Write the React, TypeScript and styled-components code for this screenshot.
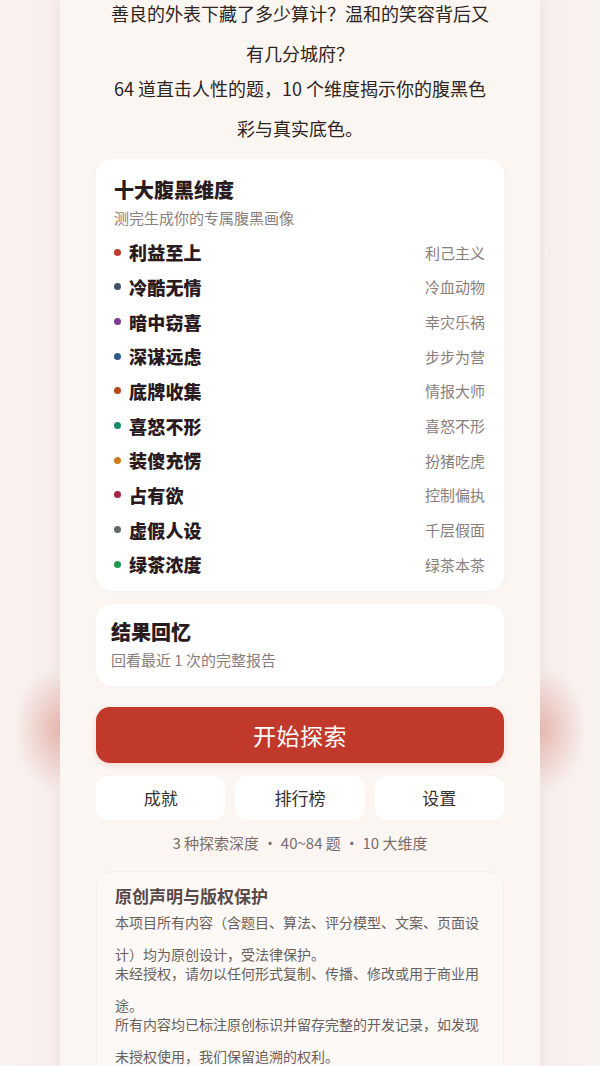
import React from 'react'
import styled, { createGlobalStyle } from 'styled-components'

const GlobalStyle = createGlobalStyle`
  html, body {
    margin: 0;
    padding: 0;
  }
  body {
    font-family: "Noto Sans CJK SC", "Noto Sans", sans-serif;
    background: #f8f1ee;
    color: #2e2422;
  }
`

const Page = styled.div`
  min-height: 100vh;
  background:
    radial-gradient(ellipse 44px 62px at 58px 736px, rgba(222, 150, 140, 0.6), rgba(222, 150, 140, 0) 100%),
    radial-gradient(ellipse 44px 62px at 542px 736px, rgba(222, 150, 140, 0.6), rgba(222, 150, 140, 0) 100%),
    linear-gradient(90deg, #f9f3f0 0px, #f6eeeb 58px, #f6eeeb 542px, #f9f3f0 600px);
`

const Column = styled.main`
  width: 480px;
  min-height: 100vh;
  margin: 0 auto;
  padding: 0 36px 40px;
  box-sizing: border-box;
  background: #fcf6f3;
  box-shadow: 0 0 18px rgba(120, 80, 70, 0.05);
`

const Intro = styled.div`
  max-width: 384px;
  margin: -7px auto 0;
  text-align: center;
`

const IntroPara = styled.p`
  margin: 0;
  font-size: 18px;
  line-height: 40px;
  color: #2e2422;
  & + & {
    margin-top: -5px;
  }
`

const Card = styled.section<{ $gap?: number }>`
  margin-top: ${p => p.$gap ?? 13}px;
  background: #ffffff;
  border-radius: 16px;
  box-shadow: 0 1px 3px rgba(140, 90, 80, 0.05);
`

const DimCard = styled(Card)`
  padding: 18px 19px 9px 18px;
`

const RecallCard = styled(Card)`
  padding: 15px 18px 15px 15px;
`

const CardTitle = styled.h2`
  margin: 0;
  font-size: 20px;
  line-height: 26px;
  font-weight: 900;
  color: #2b1b1f;
`

const CardSub = styled.p<{ $gap?: number }>`
  margin: ${p => p.$gap ?? 4}px 0 0;
  font-size: 15px;
  line-height: 22px;
  color: #8a7e7b;
`

const DimList = styled.ul`
  list-style: none;
  margin: 6px 0 0;
  padding: 0;
`

const DimRow = styled.li`
  display: flex;
  align-items: center;
  height: 34.67px;
`

const Dot = styled.span<{ $color: string }>`
  width: 7px;
  height: 7px;
  border-radius: 50%;
  background: ${p => p.$color};
  margin-right: 8px;
  flex: none;
`

const DimName = styled.span`
  font-size: 18px;
  font-weight: 900;
  color: #2a1a1e;
  letter-spacing: 0.2px;
`

const DimTag = styled.span`
  margin-left: auto;
  font-size: 15px;
  color: #8a7e7b;
`

const StartButton = styled.button`
  display: block;
  width: 100%;
  height: 56px;
  margin-top: 21px;
  border: none;
  border-radius: 14px;
  background: #c0392b;
  color: #ffffff;
  font-family: inherit;
  font-size: 23px;
  font-weight: 400;
  letter-spacing: 0.5px;
  box-shadow: 0 2px 6px rgba(192, 57, 43, 0.18);
`

const ActionRow = styled.div`
  display: grid;
  grid-template-columns: repeat(3, 1fr);
  gap: 10px;
  margin-top: 13px;
`

const ActionButton = styled.button`
  height: 44px;
  border: none;
  border-radius: 12px;
  background: #ffffff;
  color: #3a2f2d;
  font-family: inherit;
  font-size: 17px;
  font-weight: 400;
`

const Stats = styled.p`
  margin: 12px 0 0;
  font-size: 15px;
  line-height: 22px;
  text-align: center;
  color: #7a6e6b;
`

const Notice = styled.section`
  margin-top: 17px;
  padding: 13px 18px 20px;
  border-radius: 16px;
  background: #fdf9f7;
  border: 1px solid #f7eeea;
`

const NoticeTitle = styled.h3`
  margin: 0;
  font-size: 17px;
  line-height: 22px;
  font-weight: 700;
  color: #5a4a47;
`

const NoticePara = styled.p`
  margin: -1px 0 0;
  font-size: 14px;
  line-height: 32px;
  color: #6b5f5c;
  & + & {
    margin-top: -13px;
  }
`

const dimensions = [
  { name: '利益至上', tag: '利己主义', color: '#c0392b' },
  { name: '冷酷无情', tag: '冷血动物', color: '#3d5266' },
  { name: '暗中窃喜', tag: '幸灾乐祸', color: '#7d3c98' },
  { name: '深谋远虑', tag: '步步为营', color: '#2a5a8c' },
  { name: '底牌收集', tag: '情报大师', color: '#b9470f' },
  { name: '喜怒不形', tag: '喜怒不形', color: '#138d6f' },
  { name: '装傻充愣', tag: '扮猪吃虎', color: '#cf7a1c' },
  { name: '占有欲', tag: '控制偏执', color: '#a8233f' },
  { name: '虚假人设', tag: '千层假面', color: '#5f6b6b' },
  { name: '绿茶浓度', tag: '绿茶本茶', color: '#1f9a4c' },
]

export default function App() {
  return (
    <>
      <GlobalStyle />
      <Page>
        <Column>
          <Intro>
            <IntroPara>善良的外表下藏了多少算计？温和的笑容背后又有几分城府？</IntroPara>
            <IntroPara>64 道直击人性的题，10 个维度揭示你的腹黑色彩与真实底色。</IntroPara>
          </Intro>

          <DimCard $gap={11}>
            <CardTitle>十大腹黑维度</CardTitle>
            <CardSub>测完生成你的专属腹黑画像</CardSub>
            <DimList>
              {dimensions.map(d => (
                <DimRow key={d.name}>
                  <Dot $color={d.color} />
                  <DimName>{d.name}</DimName>
                  <DimTag>{d.tag}</DimTag>
                </DimRow>
              ))}
            </DimList>
          </DimCard>

          <RecallCard>
            <CardTitle>结果回忆</CardTitle>
            <CardSub $gap={4}>回看最近 1 次的完整报告</CardSub>
          </RecallCard>

          <StartButton>开始探索</StartButton>

          <ActionRow>
            <ActionButton>成就</ActionButton>
            <ActionButton>排行榜</ActionButton>
            <ActionButton>设置</ActionButton>
          </ActionRow>

          <Stats>3 种探索深度 · 40~84 题 · 10 大维度</Stats>

          <Notice>
            <NoticeTitle>原创声明与版权保护</NoticeTitle>
            <NoticePara>本项目所有内容（含题目、算法、评分模型、文案、页面设计）均为原创设计，受法律保护。</NoticePara>
            <NoticePara>未经授权，请勿以任何形式复制、传播、修改或用于商业用途。</NoticePara>
            <NoticePara>所有内容均已标注原创标识并留存完整的开发记录，如发现未授权使用，我们保留追溯的权利。</NoticePara>
          </Notice>
        </Column>
      </Page>
    </>
  )
}
